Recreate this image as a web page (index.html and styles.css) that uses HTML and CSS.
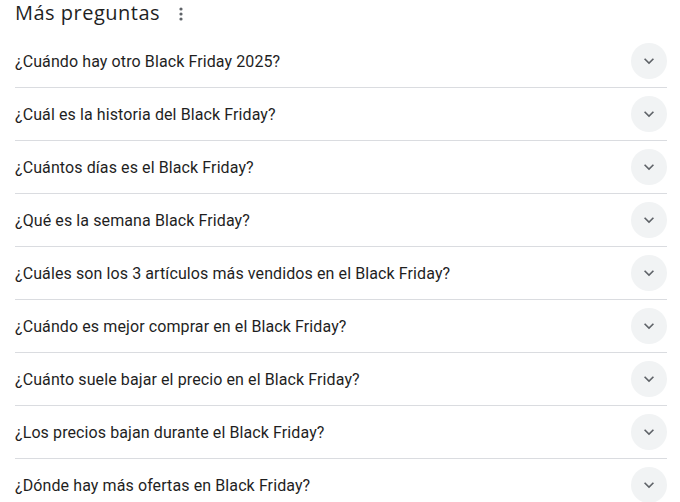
FILE: index.html
```html
<!DOCTYPE html>
<html lang="es">
<head>
<meta charset="utf-8">
<link rel="stylesheet" href="styles.css">
</head>
<body>
<div class="paa">
  <div class="head">
    <h2 class="title">Más preguntas</h2>
    <span class="more">
      <svg width="4" height="14" viewBox="0 0 4 14"><circle cx="2" cy="2" r="1.6"/><circle cx="2" cy="7" r="1.6"/><circle cx="2" cy="12" r="1.6"/></svg>
    </span>
  </div>
  <div class="list">
    <div class="row"><span class="q">¿Cuándo hay otro Black Friday 2025?</span><span class="btn"><svg width="20" height="20" viewBox="0 0 24 24"><path d="M7.41 8.59 12 13.17l4.59-4.58L18 10l-6 6-6-6z"/></svg></span></div>
    <div class="row"><span class="q">¿Cuál es la historia del Black Friday?</span><span class="btn"><svg width="20" height="20" viewBox="0 0 24 24"><path d="M7.41 8.59 12 13.17l4.59-4.58L18 10l-6 6-6-6z"/></svg></span></div>
    <div class="row"><span class="q">¿Cuántos días es el Black Friday?</span><span class="btn"><svg width="20" height="20" viewBox="0 0 24 24"><path d="M7.41 8.59 12 13.17l4.59-4.58L18 10l-6 6-6-6z"/></svg></span></div>
    <div class="row"><span class="q">¿Qué es la semana Black Friday?</span><span class="btn"><svg width="20" height="20" viewBox="0 0 24 24"><path d="M7.41 8.59 12 13.17l4.59-4.58L18 10l-6 6-6-6z"/></svg></span></div>
    <div class="row"><span class="q">¿Cuáles son los 3 artículos más vendidos en el Black Friday?</span><span class="btn"><svg width="20" height="20" viewBox="0 0 24 24"><path d="M7.41 8.59 12 13.17l4.59-4.58L18 10l-6 6-6-6z"/></svg></span></div>
    <div class="row"><span class="q">¿Cuándo es mejor comprar en el Black Friday?</span><span class="btn"><svg width="20" height="20" viewBox="0 0 24 24"><path d="M7.41 8.59 12 13.17l4.59-4.58L18 10l-6 6-6-6z"/></svg></span></div>
    <div class="row"><span class="q">¿Cuánto suele bajar el precio en el Black Friday?</span><span class="btn"><svg width="20" height="20" viewBox="0 0 24 24"><path d="M7.41 8.59 12 13.17l4.59-4.58L18 10l-6 6-6-6z"/></svg></span></div>
    <div class="row"><span class="q">¿Los precios bajan durante el Black Friday?</span><span class="btn"><svg width="20" height="20" viewBox="0 0 24 24"><path d="M7.41 8.59 12 13.17l4.59-4.58L18 10l-6 6-6-6z"/></svg></span></div>
    <div class="row"><span class="q">¿Dónde hay más ofertas en Black Friday?</span><span class="btn"><svg width="20" height="20" viewBox="0 0 24 24"><path d="M7.41 8.59 12 13.17l4.59-4.58L18 10l-6 6-6-6z"/></svg></span></div>
  </div>
</div>
</body>
</html>
```
FILE: styles.css
```css
html, body {
  margin: 0;
  padding: 0;
  background: #fff;
  overflow: hidden;
}
body {
  font-family: Roboto, "Liberation Sans", Arial, sans-serif;
  color: #1f1f1f;
}
.paa {
  width: 652px;
  margin-left: 15px;
}
.head {
  height: 35px;
  display: flex;
  align-items: flex-start;
  gap: 19px;
}
.title {
  margin: 1px 0 0 0;
  font-family: "Open Sans", Roboto, sans-serif;
  font-weight: 400;
  font-size: 20px;
  line-height: 24px;
  letter-spacing: 0.5px;
  color: #1f1f1f;
}
.more {
  display: flex;
  align-items: center;
  height: 28px;
}
.more svg {
  fill: #5f6368;
}
.row {
  height: 52px;
  display: flex;
  align-items: center;
  justify-content: space-between;
  border-bottom: 1px solid #dadce0;
}
.q {
  font-size: 16px;
  line-height: 24px;
  letter-spacing: 0.1px;
  color: #1f1f1f;
  padding-top: 2px;
}
.btn {
  width: 36px;
  height: 36px;
  border-radius: 50%;
  background: #f1f3f4;
  display: flex;
  align-items: center;
  justify-content: center;
}
.btn svg {
  fill: #5f6368;
}
```
